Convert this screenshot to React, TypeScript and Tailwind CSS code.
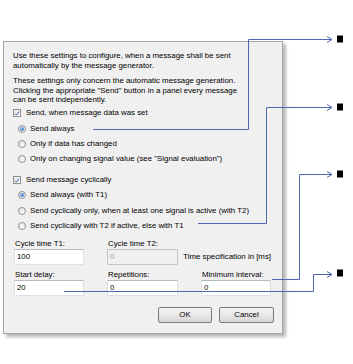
import React from 'react';

function Check() {
    return (
        <span className="w-[8px] h-[8px] border border-[#8f8f8f] bg-gradient-to-br from-[#e4e4e4] to-white flex items-center justify-center shrink-0">
            <svg viewBox="0 0 8 8" className="w-[7px] h-[7px]">
                <path d="M1.3 4.2 L3.2 6.2 L6.8 1.5" fill="none" stroke="#2a4f9a" strokeWidth={1.3} />
            </svg>
        </span>
    );
}

function Radio({ on }: { on?: boolean }) {
    return (
        <span className="w-[8px] h-[8px] rounded-full border border-[#8f8f8f] bg-gradient-to-br from-[#e2e2e2] to-white flex items-center justify-center shrink-0">
            {on && <span className="w-[4px] h-[4px] rounded-full bg-[radial-gradient(circle_at_35%_35%,#8fc1f2,#1f5aa8)]"></span>}
        </span>
    );
}

function CheckRow({ label }: { label: string }) {
    return (
        <div className="h-[15px] flex items-center gap-[5px]">
            <Check />
            <span>{label}</span>
        </div>
    );
}

function RadioRow({ label, on, h = 'h-[15px]' }: { label: string; on?: boolean; h?: string }) {
    return (
        <div className={`${h} flex items-center pl-[5px] gap-[4px]`}>
            <Radio on={on} />
            <span>{label}</span>
        </div>
    );
}

function Field({ label, value, disabled }: { label: string; value: string; disabled?: boolean }) {
    return (
        <div className="flex flex-col">
            <div className="h-[10px] leading-[10px] pl-[1px]">{label}</div>
            <div
                className={
                    disabled
                        ? 'h-[16px] border border-[#c0c3c7] rounded-[1px] bg-[#f0f0f0] text-[#9a9a9a] pl-[2px] leading-[14px]'
                        : 'h-[16px] border border-[#dbe1e8] border-t-[#b5bac0] rounded-[1px] bg-white pl-[2px] leading-[14px]'
                }
            >
                {value}
            </div>
        </div>
    );
}

function Button({ label, w }: { label: string; w: string }) {
    return (
        <div className={`${w} h-[16px] border border-[#7a7a7a] rounded-[2px] bg-gradient-to-b from-[#f4f4f4] via-[#e8e8e8] to-[#d6d6d6] flex items-center justify-center`}>
            {label}
        </div>
    );
}

export default function App() {
    return (
        <div className="relative w-[353px] h-[364px] bg-white overflow-hidden font-['Liberation_Sans',Arial,sans-serif] text-[7.85px] text-black">
            <div className="pt-[41px] pl-[3px]">
                <div className="w-[280px] h-[293px] bg-[#f0f0f0] border border-[#a5a5a5] shadow-[3px_3px_3px_rgba(0,0,0,0.28)] pl-[9px] pr-[8px] pt-[9px] flex flex-col">
                    <div className="leading-[10px]">
                        Use these settings to configure, when a message shall be sent<br />
                        automatically by the message generator.
                    </div>
                    <div className="leading-[9.5px] mt-[5px]">
                        These settings only concern the automatic message generation.<br />
                        Clicking the appropriate "Send" button in a panel every message<br />
                        can be sent independently.
                    </div>
                    <div className="mt-[1px]">
                        <CheckRow label="Send, when message data was set" />
                    </div>
                    <div className="mt-[1px]">
                        <RadioRow on label="Send always" />
                        <RadioRow label="Only if data has changed" />
                        <RadioRow label='Only on changing signal value (see "Signal evaluation")' />
                    </div>
                    <div className="mt-[6px]">
                        <CheckRow label="Send message cyclically" />
                    </div>
                    <div>
                        <RadioRow on label="Send always (with T1)" h="h-[15.5px]" />
                        <RadioRow label="Send cyclically only, when at least one signal is active (with T2)" h="h-[15.5px]" />
                        <RadioRow label="Send cyclically with T2 if active, else with T1" h="h-[15.5px]" />
                    </div>
                    <div className="mt-[5px] pl-[1px] grid grid-cols-[70px_71px_70px] gap-x-[23px]">
                        <Field label="Cycle time T1:" value="100" />
                        <Field label="Cycle time T2:" value="0" disabled />
                        <div className="flex flex-col">
                            <div className="h-[10px]"></div>
                            <div className="h-[16px] flex items-center justify-end whitespace-nowrap">Time specification in [ms]</div>
                        </div>
                    </div>
                    <div className="mt-[5px] pl-[1px] grid grid-cols-[70px_71px_70px] gap-x-[23px]">
                        <Field label="Start delay:" value="20" />
                        <Field label="Repetitions:" value="0" />
                        <Field label="Minimum interval:" value="0" />
                    </div>
                    <div className="mt-[11px] flex justify-end gap-[7px]">
                        <Button label="OK" w="w-[54px]" />
                        <Button label="Cancel" w="w-[55px]" />
                    </div>
                </div>
            </div>
            <svg className="absolute left-0 top-0 w-[353px] h-[364px] pointer-events-none" viewBox="0 0 353 364">
                <g fill="none" stroke="#4a69b0" strokeWidth={1}>
                    <path d="M93 129.5 H248.5 V39.5 H332" />
                    <path d="M327 36.5 L332 39.5 L327 42.5" />
                    <path d="M198 223.5 H266.5 V107.5 H332" />
                    <path d="M327 104.5 L332 107.5 L327 110.5" />
                    <path d="M272 279.5 H299.5 V174.5 H332" />
                    <path d="M327 171.5 L332 174.5 L327 177.5" />
                    <path d="M64 291.5 H313.5 V274.5 H332" />
                    <path d="M327 271.5 L332 274.5 L327 277.5" />
                </g>
                <g fill="#000">
                    <rect x="337" y="35.5" width="6" height="7" />
                    <rect x="337" y="103.5" width="6" height="7" />
                    <rect x="337" y="170.5" width="6" height="7" />
                    <rect x="337" y="269.5" width="6" height="7" />
                </g>
            </svg>
        </div>
    );
}
